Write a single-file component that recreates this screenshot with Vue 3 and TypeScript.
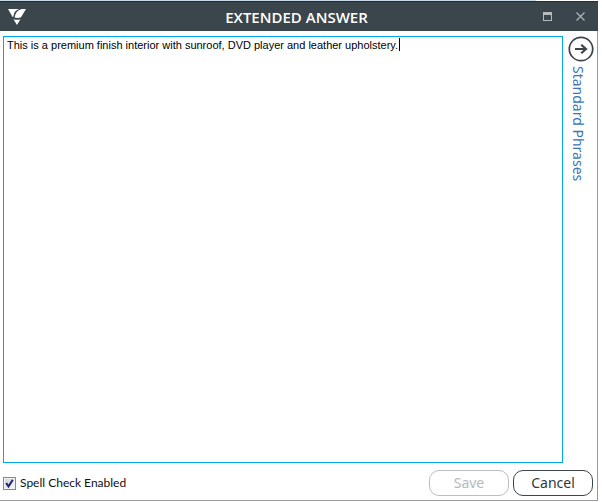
<script setup lang="ts">
import { nextTick, onMounted, ref, watch } from 'vue'

const answer = ref('This is a premium finish interior with sunroof, DVD player and leather upholstery.')
const spellCheck = ref(true)
const saved = ref(true)
const editor = ref<HTMLTextAreaElement | null>(null)
const caretLeft = ref(0)

// Places the caret marker after the last character of the single-line answer.
function placeCaret() {
  const el = editor.value
  const ctx = document.createElement('canvas').getContext('2d')
  if (!el || !ctx) return
  const style = getComputedStyle(el)
  ctx.font = `${style.fontSize} ${style.fontFamily}`
  caretLeft.value = Math.ceil(el.clientLeft + parseFloat(style.paddingLeft) + ctx.measureText(answer.value).width)
}

onMounted(placeCaret)
watch(answer, () => {
  saved.value = false
  nextTick(placeCaret)
})
</script>

<template>
  <div class="desktop">
    <main class="dialog">
      <header class="titlebar">
        <svg class="logo" viewBox="0 0 18 16" aria-hidden="true">
          <path d="M0 0H11C7.5 1.2 5.6 3.6 5.5 7.6L4.6 8Z" />
          <path d="M18 0L13 8.3C11 9.2 8.6 9 6.8 8.8C6.8 4.6 9.5 1 14 0Z" />
          <path d="M5.4 10.2C7.8 10.9 10 10.9 12.4 10.2L9 16Z" />
        </svg>
        <h1>EXTENDED ANSWER</h1>
        <div class="window-buttons">
          <button type="button" aria-label="Maximize">
            <svg width="9" height="9" viewBox="0 0 9 9"><path d="M0 0H9V9H0ZM1 3V8H8V3Z" fill="#b5babd" fill-rule="evenodd" /></svg>
          </button>
          <button type="button" aria-label="Close">
            <svg width="9" height="9" viewBox="0 0 9 9"><path d="M.5 .5L8.5 8.5M8.5 .5L.5 8.5" stroke="#a9afb2" stroke-width="1.4" /></svg>
          </button>
        </div>
      </header>

      <section class="body">
        <div class="editor">
          <textarea ref="editor" v-model="answer" :spellcheck="false" aria-label="Extended answer"></textarea>
          <span class="caret" :style="{ left: caretLeft + 'px' }"></span>
        </div>
        <button type="button" class="phrases">
          <svg width="26" height="26" viewBox="0 0 26 26" aria-hidden="true">
            <circle cx="13" cy="13" r="11.7" fill="none" stroke="#3b454c" stroke-width="1.7" />
            <path d="M7 13H18M13.2 8.7L18 13L13.2 17.3" fill="none" stroke="#3b454c" stroke-width="2.2" />
          </svg>
          <span>Standard Phrases</span>
        </button>
      </section>

      <footer class="footer">
        <label class="check">
          <input v-model="spellCheck" type="checkbox" />
          <svg v-if="spellCheck" viewBox="0 0 13 13" aria-hidden="true"><path d="M3.2 6L5.5 9.4L9.8 2.8" /></svg>
          <span>Spell Check Enabled</span>
        </label>
        <div class="actions">
          <button type="button" :disabled="saved" @click="saved = true">Save</button>
          <button type="button">Cancel</button>
        </div>
      </footer>
    </main>
  </div>
</template>

<style>
body {
  background: #fff;
}
</style>

<style scoped>
* {
  box-sizing: border-box;
}

.desktop {
  height: 100vh;
  padding: 1px 4px 1px 0;
  background: linear-gradient(90deg, #c9dbea 89%, #fff 89%) top / 100% 1px no-repeat;
  font-family: "Noto Sans", "Open Sans", sans-serif;
}

.dialog {
  display: flex;
  flex-direction: column;
  height: 100%;
  border-right: 1px solid #999;
  border-bottom: 1px solid #999;
  background: #fff;
}

.titlebar {
  display: grid;
  grid-template-columns: 1fr auto 1fr;
  align-items: center;
  height: 30px;
  margin-right: -1px;
  padding: 0 13px 0 8px;
  border-top: 1px solid #242e34;
  background: #3b454c;
}

.logo {
  width: 18px;
  height: 16px;
  fill: #fff;
}

h1 {
  margin: 0;
  color: #fff;
  font-family: "Open Sans", sans-serif;
  font-size: 15px;
  font-weight: 600;
  line-height: 20px;
}

.window-buttons {
  display: flex;
  justify-content: flex-end;
  gap: 24px;
}

button {
  padding: 0;
  border: 0;
  background: none;
  font-family: inherit;
}

.window-buttons button,
.window-buttons svg {
  display: block;
}

.body {
  display: flex;
  flex: 1;
  gap: 5px;
  min-height: 0;
  padding: 5px 3px 0;
}

.editor {
  position: relative;
  flex: 1;
}

textarea {
  display: block;
  width: 100%;
  height: 100%;
  padding: 1px 3px;
  border: 1px solid #00a8e4;
  outline: 0;
  background: #fff;
  color: #000;
  font-family: "Liberation Sans", sans-serif;
  font-size: 11px;
  line-height: 14px;
  resize: none;
}

.caret {
  position: absolute;
  top: 2px;
  width: 1px;
  height: 13px;
  background: #000;
}

.phrases {
  display: flex;
  flex-direction: column;
  align-items: flex-start;
  align-self: flex-start;
  gap: 4px;
  width: 26px;
}

.phrases svg {
  display: block;
}

.phrases span {
  color: #3d76b8;
  font-size: 14px;
  line-height: 20px;
  white-space: nowrap;
  writing-mode: vertical-rl;
}

.footer {
  display: flex;
  align-items: center;
  justify-content: space-between;
  padding: 7px 4px 4px 3px;
}

.check {
  display: flex;
  position: relative;
  align-items: center;
  gap: 4px;
  color: #111;
  font-family: Lato, sans-serif;
  font-size: 12px;
  line-height: 16px;
}

.check input {
  width: 13px;
  height: 13px;
  margin: 0;
  border: 1px solid #85898c;
  appearance: none;
  background: linear-gradient(135deg, #cdd1d6, #f8f8f8);
  box-shadow: inset 0 0 0 1px #f4f4f4;
}

.check svg {
  position: absolute;
  left: 0;
  width: 13px;
  height: 13px;
  fill: none;
  stroke: #24246e;
  stroke-width: 2;
  pointer-events: none;
}

.actions {
  display: flex;
  gap: 4px;
}

.actions button {
  width: 80px;
  height: 26px;
  border: 1px solid #3b454c;
  border-radius: 10px;
  background: #fff;
  color: #2f3940;
  font-size: 14px;
  line-height: 20px;
}

.actions button:disabled {
  border-color: #bbbec0;
  color: #b6b9bb;
}
</style>
